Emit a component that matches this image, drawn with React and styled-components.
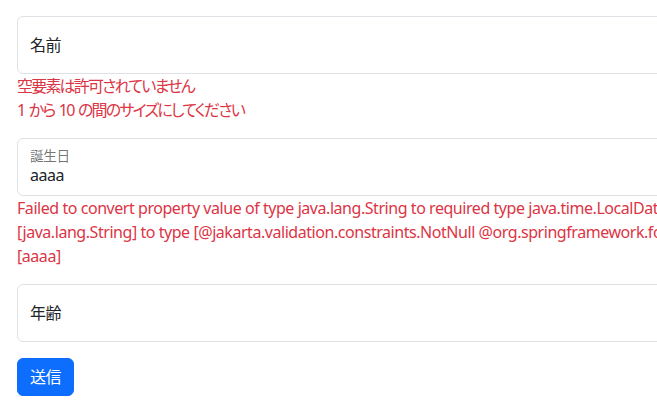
import React from 'react';
import styled, { createGlobalStyle } from 'styled-components';

const GlobalStyle = createGlobalStyle`
  html, body {
    margin: 0;
    padding: 0;
    background: #fff;
    overflow: hidden;
  }
  body {
    font-family: 'Noto Sans', 'Noto Sans CJK JP', sans-serif;
    font-size: 16px;
    line-height: 1.5;
    letter-spacing: -0.45px;
    font-feature-settings: "palt";
    color: #212529;
  }
`;

const Page = styled.div`
  padding: 16px 0 0 17px;
  width: 900px;
`;

const Form = styled.form`
  display: flex;
  flex-direction: column;
  gap: 16px;
`;

const Field = styled.div`
  display: flex;
  flex-direction: column;
`;

const Floating = styled.div`
  position: relative;
`;

const Input = styled.input`
  box-sizing: border-box;
  display: block;
  width: 100%;
  height: 58px;
  padding: ${p => (p.$filled ? '26px 12px 10px' : '16px 12px')};
  font: inherit;
  letter-spacing: inherit;
  color: #212529;
  background: #fff;
  border: 1px solid #dee2e6;
  border-radius: 6px;
  outline: none;
`;

const Label = styled.label`
  position: absolute;
  top: 0;
  left: 0;
  height: 100%;
  padding: 16px 12px;
  box-sizing: border-box;
  border: 1px solid transparent;
  pointer-events: none;
  transform-origin: 0 0;
  color: ${p => (p.$float ? 'rgba(33, 37, 41, 0.65)' : '#212529')};
  transform: ${p => (p.$float ? 'scale(.85) translateY(-.5rem) translateX(.15rem)' : 'none')};
  white-space: nowrap;
`;

const Errors = styled.div`
  color: #dc3545;
  white-space: nowrap;
`;

const ErrorLine = styled.div`
  letter-spacing: ${p => (p.$cjk ? '-1.8px' : 'inherit')};
  word-spacing: ${p => (p.$cjk ? '2px' : 'normal')};
`;

const SubmitButton = styled.button`
  align-self: flex-start;
  font: inherit;
  letter-spacing: inherit;
  color: #fff;
  background: #0d6efd;
  border: 1px solid #0d6efd;
  border-radius: 6px;
  padding: 6px 12px;
  line-height: 1.5;
  cursor: pointer;
`;

const FloatingField = ({ id, label, value, errors, cjk }) => (
  <Field>
    <Floating>
      <Input id={id} $filled={!!value} defaultValue={value} />
      <Label htmlFor={id} $float={!!value}>{label}</Label>
    </Floating>
    {errors && (
      <Errors>
        {errors.map((e, i) => <ErrorLine key={i} $cjk={cjk}>{e}</ErrorLine>)}
      </Errors>
    )}
  </Field>
);

export default function App() {
  return (
    <Page>
      <GlobalStyle />
      <Form onSubmit={e => e.preventDefault()}>
        <FloatingField
          id="name"
          label="名前"
          cjk
          errors={['空要素は許可されていません', '1 から 10 の間のサイズにしてください']}
        />
        <FloatingField
          id="birthday"
          label="誕生日"
          value="aaaa"
          errors={[
            'Failed to convert property value of type java.lang.String to required type java.time.LocalDate for property birthday; Failed to convert from type',
            '[java.lang.String] to type [@jakarta.validation.constraints.NotNull @org.springframework.format.annotation.DateTimeFormat java.time.LocalDate] for value',
            '[aaaa]',
          ]}
        />
        <FloatingField id="age" label="年齢" />
        <SubmitButton type="submit">送信</SubmitButton>
      </Form>
    </Page>
  );
}
